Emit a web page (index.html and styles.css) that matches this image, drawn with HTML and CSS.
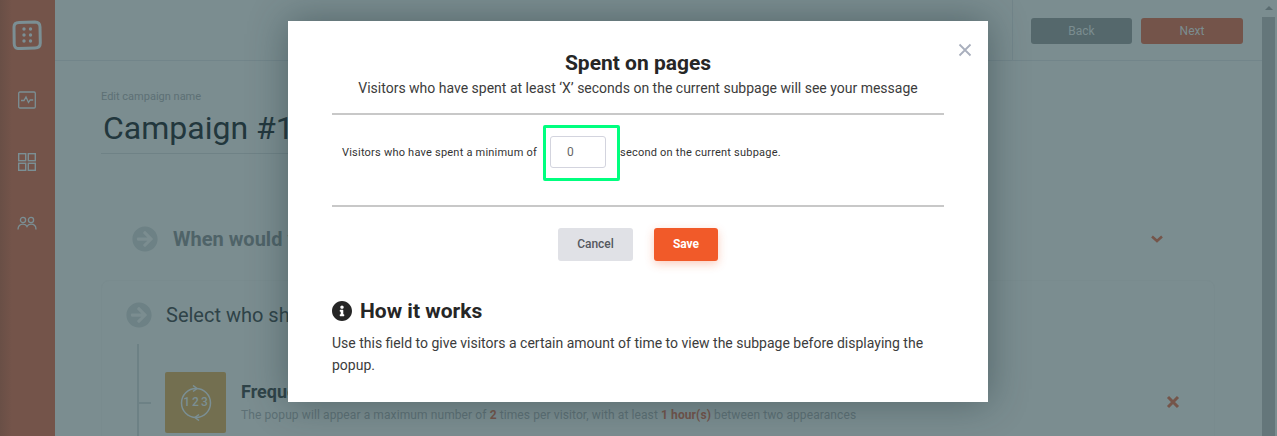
FILE: index.html
```html
<!DOCTYPE html>
<html lang="en">
<head>
    <meta charset="UTF-8">
    <title>Spent on pages</title>
    <link rel="stylesheet" href="styles.css">
</head>
<body>
    <div class="app">
        <div class="sidebar">
            <svg class="logo" width="30" height="30" viewBox="0 0 30 30">
                <path d="M7 2.5 L23 2 Q28 2 28 7 L28.3 23 Q28.3 28 23 28 L7 28.6 Q2 28.5 2.2 23 L2 7 Q2 2.6 7 2.5 Z" fill="none" stroke="#7b8f94" stroke-width="3"/>
                <g fill="#7b8f94">
                    <circle cx="12" cy="9" r="1.7"/><circle cx="18.5" cy="9" r="1.7"/>
                    <circle cx="12" cy="15" r="1.7"/><circle cx="18.5" cy="15" r="1.7"/>
                    <circle cx="12" cy="21" r="1.7"/><circle cx="18.5" cy="21" r="1.7"/>
                </g>
            </svg>
            <svg class="nav-icon" width="20" height="20" viewBox="0 0 20 20" fill="none" stroke="#7b8f94" stroke-width="1.3">
                <rect x="1.7" y="2" width="16.6" height="16" rx="1.2"/>
                <path d="M4 10.5h3l2-3.5 2.5 5.5 1.7-2.5h3"/>
            </svg>
            <svg class="nav-icon" width="20" height="20" viewBox="0 0 20 20" fill="none" stroke="#7b8f94" stroke-width="1.4">
                <rect x="1.7" y="1.7" width="7" height="7"/><rect x="11.3" y="1.7" width="7" height="7"/>
                <rect x="1.7" y="11.3" width="7" height="7"/><rect x="11.3" y="11.3" width="7" height="7"/>
            </svg>
            <svg class="nav-icon" width="20" height="20" viewBox="0 0 20 20" fill="none" stroke="#7b8f94" stroke-width="1.3">
                <circle cx="6" cy="6" r="2.6"/><circle cx="14" cy="6" r="2.6"/>
                <path d="M1 15.5c0-3.5 2-5.3 5-5.3 2 0 3.3.8 4 2.3.7-1.5 2-2.3 4-2.3 3 0 5 1.8 5 5.3"/>
            </svg>
        </div>

        <div class="main">
            <div class="topbar">
                <div class="topbar-actions">
                    <button class="top-btn back">Back</button>
                    <button class="top-btn next">Next</button>
                </div>
            </div>

            <div class="content">
                <div class="name-label">Edit campaign name</div>
                <div class="name-value">Campaign #1</div>

                <div class="when-row">
                    <svg class="step-icon" width="26" height="26" viewBox="0 0 512 512"><path fill="#6d8185" d="M256 8c137 0 248 111 248 248S393 504 256 504 8 393 8 256 119 8 256 8zm-28.9 143.6l75.5 72.4H120c-13.3 0-24 10.7-24 24v16c0 13.3 10.7 24 24 24h182.6l-75.5 72.4c-9.7 9.3-9.9 24.8-.4 34.3l11 10.9c9.4 9.4 24.6 9.4 33.9 0L404.3 273c9.4-9.4 9.4-24.6 0-33.9L271.6 106.3c-9.4-9.4-24.6-9.4-33.9 0l-11 10.9c-9.5 9.6-9.3 25.1.4 34.4z"/></svg>
                    <div class="when-title">When would you like the popup to appear?</div>
                    <svg class="chevron" width="14" height="10" viewBox="0 0 14 10"><path d="M2 2.5l5 4.5 5-4.5" fill="none" stroke="#75554a" stroke-width="2.6"/></svg>
                </div>

                <div class="who-card">
                    <div class="who-head">
                        <svg class="step-icon" width="26" height="26" viewBox="0 0 512 512"><path fill="#6d8185" d="M256 8c137 0 248 111 248 248S393 504 256 504 8 393 8 256 119 8 256 8zm-28.9 143.6l75.5 72.4H120c-13.3 0-24 10.7-24 24v16c0 13.3 10.7 24 24 24h182.6l-75.5 72.4c-9.7 9.3-9.9 24.8-.4 34.3l11 10.9c9.4 9.4 24.6 9.4 33.9 0L404.3 273c9.4-9.4 9.4-24.6 0-33.9L271.6 106.3c-9.4-9.4-24.6-9.4-33.9 0l-11 10.9c-9.5 9.6-9.3 25.1.4 34.4z"/></svg>
                        <div class="who-title">Select who should see the popup</div>
                    </div>
                    <div class="rule-list">
                        <div class="rule-item">
                            <div class="rule-tile">
                                <svg width="32" height="36" viewBox="0 0 32 36" fill="none" stroke="#7b8f94" stroke-width="1.5">
                                    <circle cx="16" cy="18" r="14.5"/>
                                    <path d="M13 .5l4 3-4 3M19 29.5l-4 3 4 3"/>
                                </svg>
                                <span class="tile-num">123</span>
                            </div>
                            <div class="rule-text">
                                <div class="rule-title">Frequency</div>
                                <div class="rule-sub">The popup will appear a maximum number of <b>2</b> times per visitor, with at least <b>1 hour(s)</b> between two appearances</div>
                            </div>
                            <svg class="rule-remove" width="14" height="14" viewBox="0 0 14 14"><path d="M2 2l10 10M12 2L2 12" stroke="#75554a" stroke-width="3"/></svg>
                        </div>
                    </div>
                </div>
            </div>
        </div>

        <div class="scrollbar">
            <div class="scroll-arrow"></div>
            <div class="scroll-track"></div>
        </div>
    </div>

    <div class="modal">
        <svg class="modal-close" width="14" height="14" viewBox="0 0 14 14"><path d="M1.5 1.5l11 11M12.5 1.5l-11 11" stroke="#a9afbd" stroke-width="1.8"/></svg>
        <h2 class="modal-title">Spent on pages</h2>
        <p class="modal-sub">Visitors who have spent at least ‘X’ seconds on the current subpage will see your message</p>

        <div class="field-row">
            <span class="field-text">Visitors who have spent a minimum of</span>
            <div class="field-mark">
                <input class="field-input" type="text" value="0">
            </div>
            <span class="field-text">second on the current subpage.</span>
        </div>

        <div class="modal-actions">
            <button class="btn-cancel">Cancel</button>
            <button class="btn-save">Save</button>
        </div>

        <div class="how-head">
            <svg width="20" height="20" viewBox="8 8 496 496"><path fill="#262626" d="M256 8C119.043 8 8 119.083 8 256c0 136.997 111.043 248 248 248s248-111.003 248-248C504 119.083 392.957 8 256 8zm0 110c23.196 0 42 18.804 42 42s-18.804 42-42 42-42-18.804-42-42 18.804-42 42-42zm56 254c0 6.627-5.373 12-12 12h-88c-6.627 0-12-5.373-12-12v-24c0-6.627 5.373-12 12-12h12v-64h-12c-6.627 0-12-5.373-12-12v-24c0-6.627 5.373-12 12-12h64c6.627 0 12 5.373 12 12v100h12c6.627 0 12 5.373 12 12v24z"/></svg>
            <span>How it works</span>
        </div>
        <p class="how-text">Use this field to give visitors a certain amount of time to view the subpage before displaying the popup.</p>
    </div>
</body>
</html>
```

FILE: styles.css
```css
* {
    box-sizing: border-box;
}

html, body {
    margin: 0;
    height: 100%;
    overflow: hidden;
}

body {
    font-family: Roboto, sans-serif;
    background: #7b8d90;
    color: #262626;
}

.app {
    display: flex;
    height: 436px;
    overflow: hidden;
}

/* sidebar */
.sidebar {
    width: 55px;
    flex-shrink: 0;
    background: linear-gradient(90deg, #694f46, #74544a 12px);
    display: flex;
    flex-direction: column;
    align-items: center;
    padding-top: 20px;
}

.logo {
    margin-bottom: 40px;
    margin-left: -1px;
}

.nav-icon {
    margin-bottom: 42px;
    margin-left: -1px;
}

/* top bar */
.main {
    flex: 1;
    min-width: 0;
}

.topbar {
    height: 61px;
    border-bottom: 1px solid #72858a;
    display: flex;
    justify-content: flex-end;
}

.topbar-actions {
    width: 250px;
    border-left: 1px solid #72858a;
    padding: 18px 19px 0 18px;
    display: flex;
    gap: 9px;
}

.top-btn {
    height: 26px;
    width: 101px;
    border: none;
    border-radius: 3px;
    font-family: Roboto, sans-serif;
    font-size: 12px;
    color: #7b8d90;
    padding: 0;
}

.top-btn.back {
    background: #55686c;
}

.top-btn.next {
    background: #74544a;
    width: 102px;
}

/* campaign content */
.content {
    padding: 29px 47px 0 46px;
}

.name-label {
    font-size: 11px;
    line-height: 14px;
    color: #5d7075;
}

.name-value {
    width: 300px;
    height: 45px;
    margin-top: 5px;
    font-size: 32px;
    line-height: 38px;
    padding-left: 2px;
    color: #22373d;
    border-bottom: 1px solid #6f8286;
}

.when-row {
    margin-top: 72px;
    padding-left: 31px;
    display: flex;
    align-items: center;
    height: 26px;
}

.when-title {
    margin-left: 15px;
    flex: 1;
    font-size: 20px;
    font-weight: 700;
    color: #4f6368;
}

.chevron {
    margin-right: 51px;
}

.who-card {
    margin-top: 28px;
    border: 1px solid #798b8e;
    border-radius: 8px;
    padding: 21px 0 0 24px;
    height: 170px;
}

.who-head {
    display: flex;
    align-items: center;
}

.who-title {
    margin-left: 14px;
    font-size: 20px;
    font-weight: 400;
    color: #2f4348;
}

.rule-list {
    margin: 16px 0 0 11px;
    border-left: 2px solid #6d8185;
    padding-top: 28px;
    height: 100px;
}

.rule-item {
    display: flex;
    position: relative;
    padding-left: 26px;
}

/* tick from the line to the tile */
.rule-item::before {
    content: '';
    position: absolute;
    left: 0;
    top: 30px;
    width: 12px;
    height: 2px;
    background: #6d8185;
}

.rule-tile {
    width: 61px;
    height: 61px;
    flex-shrink: 0;
    background: #736f50;
    border-radius: 2px;
    position: relative;
    display: flex;
    align-items: center;
    justify-content: center;
}

.tile-num {
    position: absolute;
    left: 0;
    right: 0;
    top: 23px;
    text-align: center;
    font-size: 12px;
    font-weight: 500;
    line-height: 14px;
    letter-spacing: 2px;
    padding-left: 2px;
    color: #7b8f94;
}

.rule-text {
    margin-left: 15px;
    padding-top: 9px;
    flex: 1;
}

.rule-title {
    font-size: 18px;
    line-height: 22px;
    font-weight: 700;
    color: #2f4348;
}

.rule-sub {
    margin-top: 5px;
    font-size: 12px;
    line-height: 15px;
    letter-spacing: 0.1px;
    color: #5d7075;
}

.rule-sub b {
    color: #74544a;
}

.rule-remove {
    margin: 23px 34px 0 0;
}

.scrollbar {
    width: 15px;
    flex-shrink: 0;
}

.scroll-arrow {
    height: 17px;
    position: relative;
}

.scroll-arrow::after {
    content: '';
    position: absolute;
    left: 3px;
    top: 6px;
    border: 4px solid transparent;
    border-top: none;
    border-bottom: 4px solid #5a6c70;
}

.scroll-track {
    height: 419px;
    width: 13px;
    background: #64767a;
}

/* modal */
.modal {
    position: absolute;
    left: 288px;
    top: 21px;
    width: 700px;
    height: 381px;
    background: #fff;
    overflow: hidden;
    padding: 29px 44px 0;
    box-shadow: 0 0 36px rgba(30, 50, 55, 0.45);
}

.modal-close {
    position: absolute;
    right: 16px;
    top: 22px;
}

.modal-title {
    margin: 0;
    text-align: center;
    font-size: 21px;
    line-height: 26px;
    font-weight: 700;
    color: #262626;
}

.modal-sub {
    margin: 0;
    height: 39px;
    padding-top: 1px;
    border-bottom: 2px solid #c8c8c8;
    text-align: center;
    font-size: 14px;
    line-height: 22px;
    color: #3c3c3c;
}

.field-row {
    height: 92px;
    border-bottom: 2px solid #c8c8c8;
    padding: 10px 0 0 10px;
    display: flex;
    align-items: flex-start;
}

.field-text {
    font-size: 11px;
    font-weight: 400;
    line-height: 14px;
    letter-spacing: 0.22px;
    color: #333;
    margin-top: 21px;
}

.field-mark {
    width: 77px;
    height: 56px;
    margin-left: 6px;
    border: 3px solid #00ff7f;
    border-radius: 2px;
    padding: 8px 0 0 4px;
}

.field-input {
    display: block;
    width: 56px;
    height: 32px;
    border: 1px solid #d3d4de;
    border-radius: 3px;
    padding: 0 0 0 16px;
    font-family: Roboto, sans-serif;
    font-size: 12px;
    color: #666;
    outline: none;
}

.modal-actions {
    margin-top: 21px;
    display: flex;
    justify-content: center;
    gap: 21px;
}

.btn-cancel,
.btn-save {
    height: 33px;
    border: none;
    border-radius: 3px;
    font-family: Roboto, sans-serif;
    font-size: 12px;
    padding: 0 0 2px;
}

.btn-cancel {
    width: 75px;
    background: #e0e1e6;
    color: #55585f;
    font-weight: 500;
}

.btn-save {
    width: 64px;
    background: #f15a29;
    color: #fff;
    font-weight: 700;
    box-shadow: 0 3px 10px rgba(241, 90, 41, 0.3);
}

.how-head {
    margin-top: 38px;
    display: flex;
    align-items: center;
    gap: 8px;
    font-size: 21px;
    line-height: 24px;
    font-weight: 700;
    color: #262626;
}

.how-text {
    margin: 9px 0 0;
    font-size: 14px;
    line-height: 22px;
    color: #3c3c3c;
}
```
